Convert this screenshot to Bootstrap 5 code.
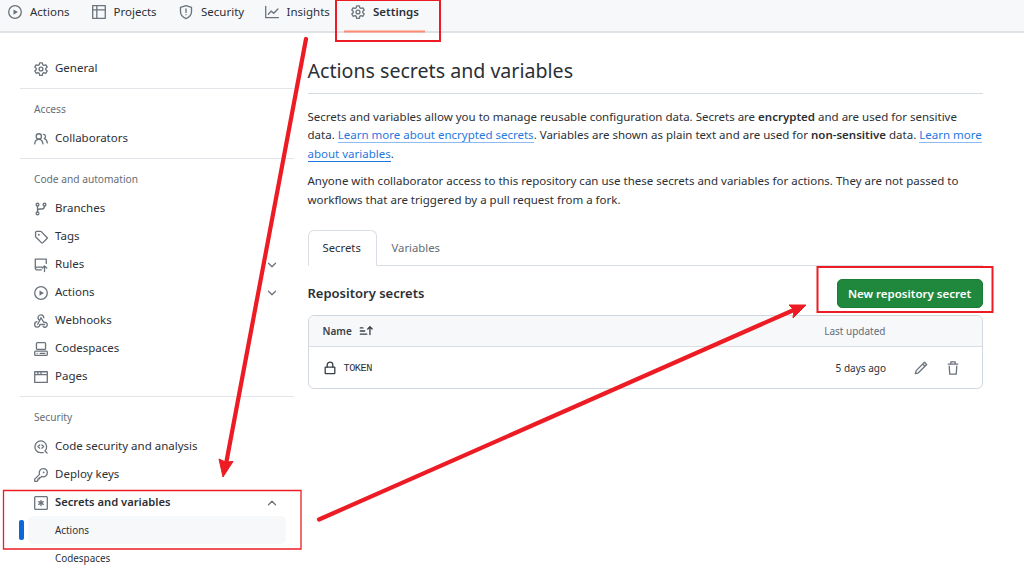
<!DOCTYPE html>
<html lang="en">
<head>
<meta charset="utf-8">
<meta name="viewport" content="width=device-width, initial-scale=1">
<title>Actions secrets and variables</title>
<link href="https://cdn.jsdelivr.net/npm/bootstrap@5.3.0/dist/css/bootstrap.min.css" rel="stylesheet">
<style>
  body { font-family: "Noto Sans", "Open Sans", sans-serif; font-size: 11.5px; color: #2b3036; line-height: 18.4px; height: 570px; overflow: hidden; position: relative; }
  svg.oct { width: 14px; height: 14px; flex: none; fill: none; stroke: #6b737c; stroke-width: 1.5; stroke-linecap: round; stroke-linejoin: round; overflow: visible; }
  svg.oct .solid { fill: #6b737c; stroke: none; }
  svg.oct.dark { stroke: #3a4047; }
  .repo-nav { height: 33px; background: #f6f8fa; border-bottom: 2px solid #dee3e8; padding-left: 8px; }
  .repo-nav .nav-link { height: 24px; padding: 0; gap: 8px; color: #2b3036; white-space: nowrap; }
  .repo-nav .tab-a { width: 83.5px; }
  .repo-nav .tab-b { width: 87.500px; }
  .repo-nav .tab-c { width: 85.500px; }
  .repo-nav .tab-d { width: 86.500px; }
  .side { width: 274px; margin-left: 20px; padding-top: 21px; flex: none; }
  .side .entry { height: 28px; padding: 1px 14px 0; gap: 7px; color: #2b3036; white-space: nowrap; }
  .side .entry.fw-semibold { font-size: 11.200px; }
  .side .group-title { height: 29px; padding: 0 14px; font-size: 10.200px; color: #656d76; white-space: nowrap; }
  .side hr { margin: 6px 0; border-color: #d8dee4; opacity: .75; }
  .side .sub { height: 28px; margin: 0 8px; padding-left: 27px; font-size: 9.900px; white-space: nowrap; border-radius: 5px; }
  .side .sub.current { background: #f6f8fa; }
  .side .sub.current::before { content: ""; position: absolute; left: -9px; top: 4px; width: 5px; height: 20px; border-radius: 2px; background: #0969da; }
  .chev { margin-right: 1px; }
  .content { width: 675px; margin-left: 13.5px; padding-top: 23px; }
  h1 { font-size: 19.6px; line-height: 30px; font-weight: 400; margin: 0 0 14px; padding-bottom: 7px; border-bottom: 1px solid #d3dbe3; height: 38px; }
  .content p { margin: 0 0 9px; white-space: nowrap; }
  .content a.doc { color: #1f78e0; text-decoration: none; border-bottom: 1px solid #8dbcf2; }
  .content a.doc.strong-line { border-color: #1f78e0; }
  .nav-tabs { margin-top: 21px; height: 36px; border-color: #d8dee4; }
  .nav-tabs .nav-link { height: 36px; padding: 0 14px; font-size: 11.300px; color: #656d76; border-radius: 6px 6px 0 0; }
  .nav-tabs .nav-link.active { color: #2b3036; border-color: #d8dee4 #d8dee4 #fff; width: 69px; }
  .section-head { height: 49px; padding-top: 6px; }
  h2 { font-size: 13px; font-weight: 600; margin: 0; }
  .btn-new { background: #1f883d; color: #fff; font-weight: 600; font-size: 11.5px; width: 146px; height: 29px; padding: 0; border: 1px solid #1c7d38; border-radius: 5px; }
  .secret-box { border: 1px solid #d0d7de; border-radius: 6px; height: 74px; overflow: hidden; font-size: 10px; white-space: nowrap; }
  .secret-head { height: 31px; background: #f6f8fa; border-bottom: 1px solid #d8dee4; padding: 0 96px 0 14px; color: #656d76; }
  .secret-head .fw-semibold { color: #3a4047; }
  .secret-row { height: 42px; padding: 0 22px 0 14px; }
  .secret-name { font-family: "Liberation Mono", monospace; font-size: 10.300px; letter-spacing: -.5px; }
  .head-gap { margin-left: 7px; }
  .date-cell { margin-right: 28px; }
  .pen-cell { margin-right: 17.500px; }
  .notes { position: absolute; left: 0; top: 0; pointer-events: none; }
</style>
</head>
<body class="bg-white">
<nav class="repo-nav nav flex-nowrap">
  <a class="nav-link tab-a d-flex align-items-center" href="#"><svg class="oct" viewBox="0 0 16 16"><circle cx="8" cy="8" r="7.2"/><path class="solid" d="M6.3 5v6l5-3z"/></svg>Actions</a>
  <a class="nav-link tab-b d-flex align-items-center" href="#"><svg class="oct" viewBox="0 0 16 16"><path d="M.8.8h14.4v14.4H.8zM.8 5.500h14.4M5.500.8v14.4"/></svg>Projects</a>
  <a class="nav-link tab-c d-flex align-items-center" href="#"><svg class="oct" viewBox="0 0 16 16"><path d="M8 .6l6.300 2.200v4.700c0 4-2.500 6.500-6.300 8-3.800-1.500-6.300-4-6.300-8V2.800zM8 4.500v4M8 11v.1"/></svg>Security</a>
  <a class="nav-link tab-d d-flex align-items-center" href="#"><svg class="oct" viewBox="0 0 16 16"><path d="M.8 1.500v13h14.500M3.800 10.500l3.200-3.500 3 2.500 4.800-5"/></svg>Insights</a>
  <a class="nav-link d-flex align-items-center fw-semibold" href="#"><svg class="oct" viewBox="0 0 16 16"><path d="M6.500.9h3l.5 2.200 1.400.8 2.200-.7 1.500 2.600-1.700 1.500v1.500l1.700 1.500-1.500 2.600-2.200-.7-1.400.8-.5 2.200h-3L6 13l-1.400-.8-2.200.7L.9 10.300l1.700-1.500V7.300L.9 5.800l1.500-2.600 2.200.7L6 3.100z"/><circle cx="8" cy="8" r="2.200"/></svg>Settings</a>
</nav>
<div class="d-flex">
  <aside class="side">
    <div class="entry d-flex align-items-center"><svg class="oct" viewBox="0 0 16 16"><path d="M6.500.9h3l.5 2.200 1.400.8 2.200-.7 1.500 2.600-1.700 1.500v1.500l1.700 1.500-1.500 2.600-2.200-.7-1.400.8-.5 2.200h-3L6 13l-1.400-.8-2.200.7L.9 10.300l1.700-1.500V7.300L.9 5.800l1.500-2.600 2.200.7L6 3.100z"/><circle cx="8" cy="8" r="2.200"/></svg>General</div>
    <hr>
    <div class="group-title d-flex align-items-center">Access</div>
    <div class="entry d-flex align-items-center"><svg class="oct" viewBox="0 0 16 16"><circle cx="5.500" cy="5" r="3"/><path d="M.8 13.500c.3-3 2-5 4.700-5s4.400 2 4.700 5M10.800 2.800c2.500 0 3.300 3.400 1 4.700 2 .7 3.200 2.500 3.400 5"/></svg>Collaborators</div>
    <hr>
    <div class="group-title d-flex align-items-center">Code and automation</div>
    <div class="entry d-flex align-items-center"><svg class="oct" viewBox="0 0 16 16"><circle cx="4" cy="3" r="1.600"/><circle cx="4" cy="13" r="1.600"/><circle cx="12" cy="3" r="1.600"/><path d="M4 4.800v6.400M12 4.800c0 2.500-1 3.200-3 3.200H6.500C5 8 4 8.500 4 10"/></svg>Branches</div>
    <div class="entry d-flex align-items-center"><svg class="oct" viewBox="0 0 16 16"><path d="M1.800 2.500v5.200L8.700 14.700c.4.4.8.400 1.200 0l5-5c.4-.4.4-.8 0-1.200L8 1.600H2.700z"/><circle class="solid" cx="5.500" cy="5.500" r="1.100"/></svg>Tags</div>
    <div class="entry d-flex align-items-center"><svg class="oct" viewBox="0 0 16 16"><path d="M8.500 13.500H2.800C1.500 13.500 1.200 10.500 3.300 10.500H9M1.500 12V1.200h12.500v5M12 15.500V9.500M9.500 11.500L12 9l2.500 2.500"/></svg>Rules<svg class="oct chev ms-auto" viewBox="0 0 16 16"><path d="M4 6l4 4 4-4"/></svg></div>
    <div class="entry d-flex align-items-center"><svg class="oct" viewBox="0 0 16 16"><circle cx="8" cy="8" r="7.200"/><path class="solid" d="M6.300 5v6l5-3z"/></svg>Actions<svg class="oct chev ms-auto" viewBox="0 0 16 16"><path d="M4 6l4 4 4-4"/></svg></div>
    <div class="entry d-flex align-items-center"><svg class="oct" viewBox="0 0 16 16"><path d="M5.300 6.300a3.300 3.300 0 1 1 5.900-2M8 4.300l3.200 5.400c2-.9 4 .5 4 2.600 0 2.600-3 3.700-4.700 2M8 4.300L4.300 11.800M3.300 8.800c-3.400.6-3.400 5.700 0 6.200 2 .2 3.200-1.200 3.500-3H12"/></svg>Webhooks</div>
    <div class="entry d-flex align-items-center"><svg class="oct" viewBox="0 0 16 16"><rect x="2.800" y=".8" width="10.400" height="7.700" rx="1"/><rect x=".8" y="10.500" width="14.400" height="4.700" rx="1"/><path d="M3.500 12.900h.1M7 12.900h5.500"/></svg>Codespaces</div>
    <div class="entry d-flex align-items-center"><svg class="oct" viewBox="0 0 16 16"><path d="M.8 2h14.400v12.200H.8zM.8 5.200h14.400M4.500 2v3M8 2v3"/></svg>Pages</div>
    <hr>
    <div class="group-title d-flex align-items-center">Security</div>
    <div class="entry d-flex align-items-center"><svg class="oct" viewBox="0 0 16 16"><path d="M12.500 12.500A6.700 6.700 0 1 0 7.500 14.500h3M12.500 12.500l2.500 2.500M6.500 5.700L4.500 7.500l2 1.800M9 5.700l2 1.800-2 1.800"/></svg>Code security and analysis</div>
    <div class="entry d-flex align-items-center"><svg class="oct" viewBox="0 0 16 16"><path d="M6.300 7.300C5 3.500 7.500.8 10.500.8c2.700 0 4.700 2 4.700 4.700 0 3-2.700 5.500-6.500 4.200L7.500 11H6v1.500H4.500V14l-1 1.200H.8v-2.500z"/><circle class="solid" cx="11" cy="5" r="1"/></svg>Deploy keys</div>
    <div class="entry d-flex align-items-center fw-semibold"><svg class="oct" viewBox="0 0 16 16"><rect x=".8" y=".8" width="14.400" height="14.400" rx="1"/><path d="M8 5v6M5.400 6.500l5.200 3M10.600 6.500l-5.200 3"/></svg>Secrets and variables<svg class="oct chev ms-auto" viewBox="0 0 16 16"><path d="M4 10l4-4 4 4"/></svg></div>
    <div class="sub current d-flex align-items-center position-relative">Actions</div>
    <div class="sub d-flex align-items-center">Codespaces</div>
  </aside>
  <main class="content">
    <h1>Actions secrets and variables</h1>
    <p>Secrets and variables allow you to manage reusable configuration data. Secrets are <b class="fw-semibold">encrypted</b> and are used for sensitive<br>data. <a class="doc" href="#">Learn more about encrypted secrets</a>. Variables are shown as plain text and are used for <b class="fw-semibold">non-sensitive</b> data. <a class="doc" href="#">Learn more</a><br><a class="doc strong-line" href="#">about variables</a>.</p>
    <p>Anyone with collaborator access to this repository can use these secrets and variables for actions. They are not passed to<br>workflows that are triggered by a pull request from a fork.</p>
    <ul class="nav nav-tabs">
      <li class="nav-item"><a class="nav-link active d-flex align-items-center" href="#">Secrets</a></li>
      <li class="nav-item"><a class="nav-link d-flex align-items-center" href="#">Variables</a></li>
    </ul>
    <div class="section-head d-flex align-items-center justify-content-between">
      <h2>Repository secrets</h2>
      <button class="btn btn-new" type="button">New repository secret</button>
    </div>
    <div class="secret-box">
      <div class="secret-head d-flex align-items-center"><span class="fw-semibold">Name</span><svg class="oct dark head-gap" viewBox="0 0 16 16"><path d="M1.500 4.500h3M1.500 8h5M1.500 11.500h7.500M12.500 12V4M10 5.700l2.500-2.500L15 5.700"/></svg><span class="ms-auto">Last updated</span></div>
      <div class="secret-row d-flex align-items-center"><svg class="oct dark" viewBox="0 0 16 16"><rect x="2.500" y="7" width="11" height="7.500" rx=".5"/><path d="M4.800 7V4.500a3.200 3.200 0 0 1 6.400 0V7"/></svg><span class="secret-name head-gap">TOKEN</span><span class="date-cell ms-auto">5 days ago</span><svg class="oct pen-cell" viewBox="0 0 16 16"><path d="M12 1.500l2.500 2.500-9.500 9.500-3.500 1 1-3.500zM10 3.500l2.500 2.500"/></svg><svg class="oct" viewBox="0 0 16 16"><path d="M2.500 3.500h11M5.500 3.500V1h5v2.500M3.700 6l.6 9h7.400l.6-9"/></svg></div>
    </div>
  </main>
</div>
<svg class="notes" width="1024" height="570" viewBox="0 0 1024 570" fill="none" stroke="#ed1c24" stroke-width="2">
  <path d="M344 31.500h81" stroke="#fd8c73"/>
  <path d="M336 0h104v41H336z"/>
  <path d="M817.500 267h175v45h-175z"/>
  <path d="M3.500 490.500h297.500v58.500H3.500z" stroke-width="1.300"/>
  <path d="M306 39L226 464M319 519.500L796 309" stroke-width="4.200" stroke-linecap="round"/>
  <path d="M223 477L219 459l6.500 3 7.500-.5zM806 305l-17 0 5 5-1 8z" fill="#ed1c24" stroke-width="1"/>
</svg>
<script src="https://cdn.jsdelivr.net/npm/bootstrap@5.3.0/dist/js/bootstrap.bundle.min.js"></script>
</body>
</html>
